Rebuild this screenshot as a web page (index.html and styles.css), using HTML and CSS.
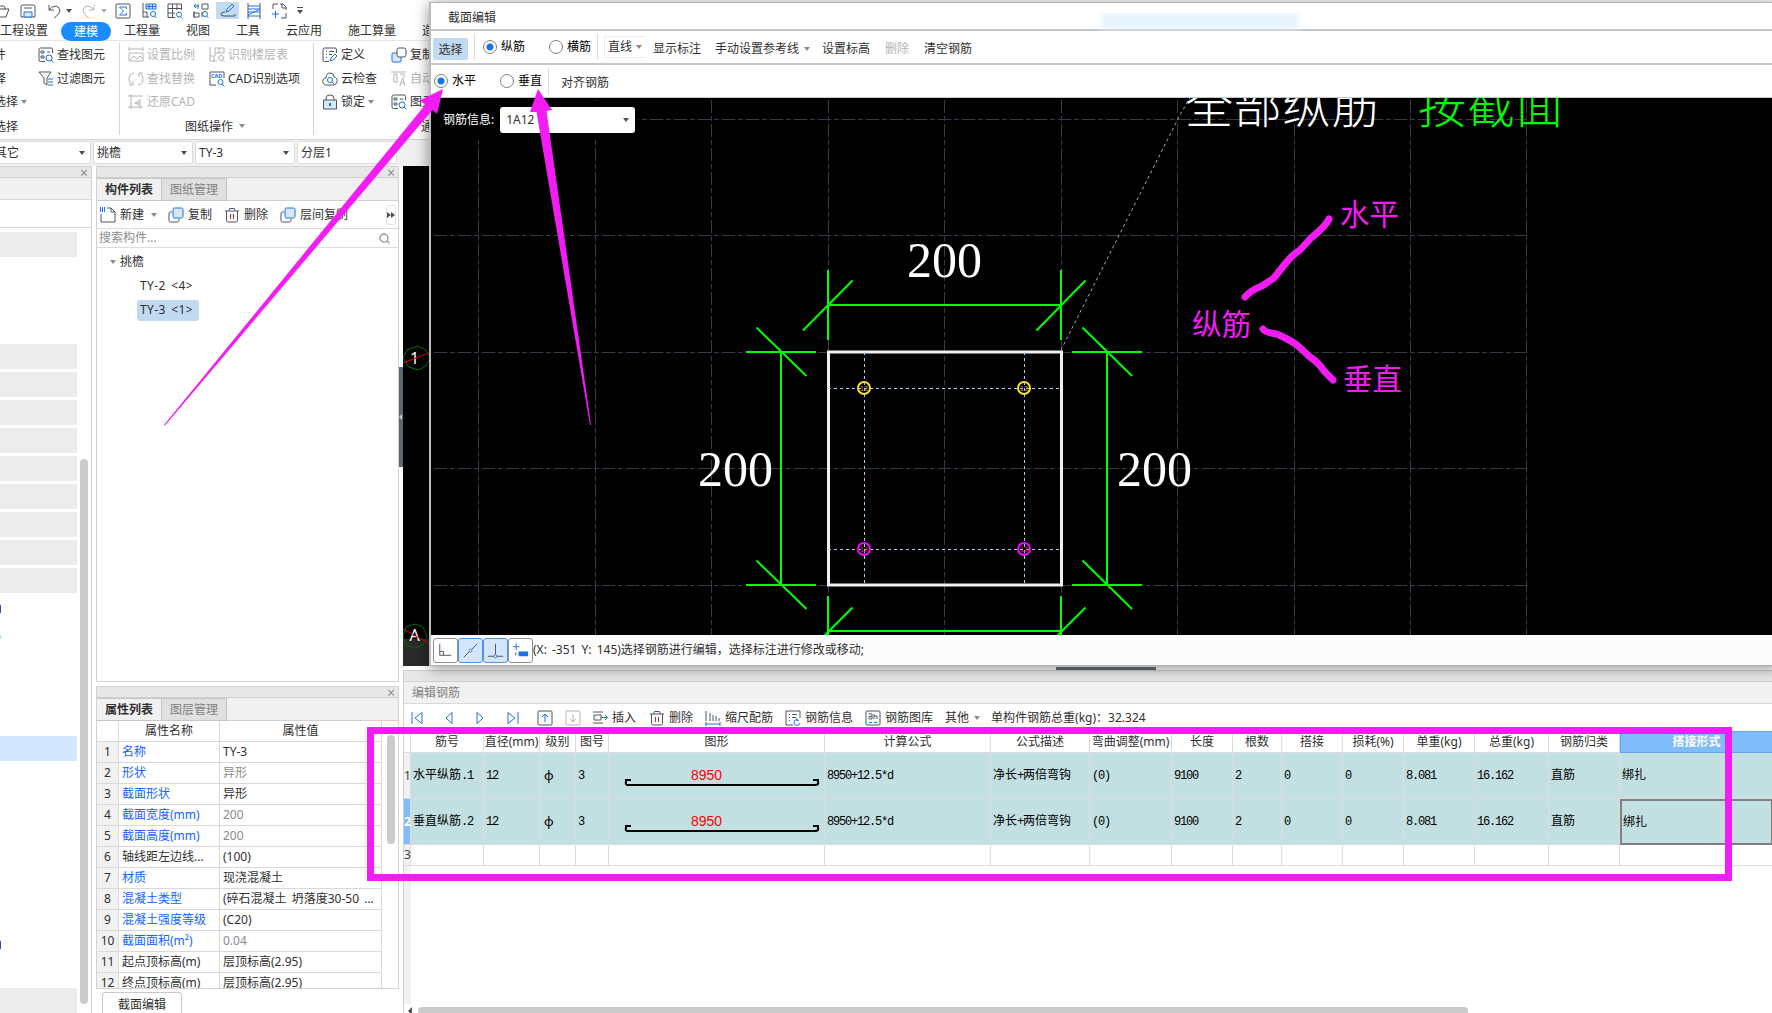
FILE: index.html
```html
<!DOCTYPE html>
<html lang="zh-CN">
  <head>
    <meta charset="UTF-8" />
    <meta name="viewport" content="width=device-width, initial-scale=1.0" />
    <title>截面编辑</title>
    <link rel="stylesheet" href="styles.css">
  </head>
  <body>
    <!-- shared icons -->
    <svg class="defs" width="0" height="0">
      <symbol id="i-copy" viewBox="0 0 16 16"><path class="d" d="M4 5H2.500Q1 5 1 6.500V13.500Q1 15 2.500 15H9.500Q11 15 11 13.500V12" /><rect class="bf" x="5" y="1" width="10" height="10" rx="1.500" /></symbol>
      <symbol id="i-trash" viewBox="0 0 16 16"><path class="d" d="M1 4H15M5 4V2.500Q5 1.500 6 1.500H10Q11 1.500 11 2.500V4M2.500 4V13.500Q2.500 15 4 15H12Q13.500 15 13.500 13.500V4" /><path class="r" d="M6.500 7V12M9.500 7V12" /></symbol>
      <symbol id="i-list" viewBox="0 0 16 16"><path class="d" d="M7 14.500H2.500Q1 14.500 1 13V2.500Q1 1 2.500 1H13Q14.500 1 14.500 2.500V6M4 4.500H5M7 4.500H12M4 7.500H5M7 7.500H10M4 10.500H5" /><path class="b" d="M8 14L9 11L13 7L15 9L11 13Z" /></symbol>
      <symbol id="i-find" viewBox="0 0 16 16"><path class="d" d="M7 14.500H2.500Q1 14.500 1 13V2.500Q1 1 2.500 1H13Q14.500 1 14.500 2.500V6M3 4H6V6H3ZM3 9H6V11H3ZM9 5H12" /><circle class="b" cx="11" cy="11" r="3" /><path class="b" d="M13 13L15.500 15.500" /></symbol>
      <symbol id="i-grid" viewBox="0 0 16 16"><path class="d" d="M8 14.500H1V1H14.500V7M1 5.500H14.500M1 10H8M5.500 1V14.500M10 1V7" /><circle class="b" cx="12" cy="11.500" r="2.500" /><path class="b" d="M13.500 13.500L15.500 15.500" /></symbol>
    </svg>

    <div class="app">
      <div class="quickbar">
        <svg class="ic open" viewBox="0 0 16 16"><path class="d" d="M0 3H9Q11 3 11 5V6M0 14H12L15 6H4" /></svg>
        <svg class="ic save" viewBox="0 0 16 16"><path class="d" d="M3 2H13Q15 2 15 4V14H1V4Q1 2 3 2ZM4 5H12" /><path class="bf" d="M4 9H12V14H4Z" /></svg>
        <svg class="ic undo" viewBox="0 0 16 16"><path class="d" d="M3 2V7H8M3 7Q6 3 10 3Q14 4 14 8Q13 12 8 15" /></svg>
        <i class="caret"></i>
        <svg class="ic redo" viewBox="0 0 16 16"><path class="g" d="M13 2V7H8M13 7Q10 3 6 3Q2 4 2 8Q3 12 8 15" /></svg>
        <i class="caret light"></i>
        <svg class="ic sigma" viewBox="0 0 16 16"><rect class="d" x="1" y="1" width="14" height="14" rx="1" /><path class="b" d="M11.500 6V4H4.500L8.500 8L4.500 12H11.500V10" /></svg>
        <svg class="ic q" viewBox="0 0 16 16"><path class="d" d="M2 0V14H8M2 9H6V14" /><path class="bf" d="M5 1H15V6H5ZM5 3.500H15M8 1V6M11.500 1V6" /><circle class="b" cx="12" cy="11" r="2.500" /><path class="b" d="M13.500 13L15.500 15" /></svg>
        <svg class="ic q"><use href="#i-grid" /></svg>
        <svg class="ic q" viewBox="0 0 16 16"><path class="d" d="M9 1H15V6H9ZM1 10H6V14H1ZM9 9V14M1 8V15" /><path class="b" d="M1 3H6M3 1L1 3L3 5M5 1V6" /><circle class="b" cx="12" cy="11" r="2.500" /><path class="b" d="M13.500 13L15.500 15" /></svg>
        <span class="q-active"><svg class="ic" viewBox="0 0 16 16"><path class="b" d="M6 10L7 7L12 2L14 4L9 9Z" /><path class="d" d="M5 10Q1 10 1 12Q1 14 4 14H15V12" /></svg></span>
        <svg class="ic q" viewBox="0 0 16 16"><path class="d" d="M2 0V16M14 0V16" /><path class="b" d="M2 3H14M2 6H14L2 12M2 9H14M2 13H14" /></svg>
        <svg class="ic q last" viewBox="0 0 16 16"><path class="d" d="M2 6V1H7M9 1H12L15 4V7M15 10V15H10M11 1V5H15" /><path class="b" d="M1 11H8M4.500 8V15" /></svg>
        <i class="caret over"></i>
      </div>

      <div class="menu">
        <span class="first">工程设置</span>
        <span class="on">建模</span>
        <span>工程量</span>
        <span>视图</span>
        <span>工具</span>
        <span>云应用</span>
        <span>施工算量</span>
        <span>造价</span>
      </div>

      <div class="ribbon">
        <div class="group g1">
          <div class="col c-cut">
            <span>件</span><span>择</span><span>选择 <i class="caret grey"></i></span><span>选择</span>
          </div>
          <div class="col">
            <span><svg class="ic"><use href="#i-find" /></svg>查找图元</span>
            <span><svg class="ic" viewBox="0 0 16 16"><path class="d" d="M1 1H13L9 7V14L6 12V7Z" /><path class="b" d="M10 8H15M10 11H15M10 14H15" /></svg>过滤图元</span>
          </div>
        </div>
        <div class="group g2">
          <div class="pair">
            <div class="col off">
              <span><svg class="ic" viewBox="0 0 16 16"><path class="g" d="M1 2H15M1 0V4M15 0V4M1 6H15V14H1ZM2 13L6 9L9 12L12 9L15 12" /></svg>设置比例</span>
              <span><svg class="ic" viewBox="0 0 16 16"><path class="g" d="M6 2Q1 3 1 8Q1 12 4 14M1 14H5V10M10 14Q15 13 15 8Q15 4 12 2M15 2H11V6" /></svg>查找替换</span>
              <span><svg class="ic" viewBox="0 0 16 16"><path class="g" d="M0 2H15M3 0V15M0 13H15M12 5V15M12 6L7 9L11 11M7 9H12" /></svg>还原CAD</span>
            </div>
            <div class="col c2">
              <span class="off"><svg class="ic" viewBox="0 0 16 16"><path class="g" d="M1 0V14H8M1 9H5V14M6 1H15V6H6ZM10 1V6M6 6V9" /><circle class="g" cx="12" cy="11" r="2.500" /><path class="g" d="M13.500 13L15.500 15" /></svg>识别楼层表</span>
              <span><svg class="ic" viewBox="0 0 16 16"><path class="d" d="M7 14H1V1H15V7" /><text class="cad" x="2" y="7">CAD</text><circle class="b" cx="11.500" cy="11" r="2.500" /><path class="b" d="M13 13L15.500 15.500" /></svg>CAD识别选项</span>
            </div>
          </div>
          <div class="caption">图纸操作 <i class="caret grey"></i></div>
        </div>
        <div class="group g3">
          <div class="col">
            <span><svg class="ic"><use href="#i-list" /></svg>定义</span>
            <span><svg class="ic" viewBox="0 0 16 16"><path class="d" d="M4 14Q0 13 1 9Q2 7 4 7Q4 2 8 2Q12 2 12 6Q16 7 15 11Q14 14 12 14Z" /><circle class="b" cx="8" cy="9" r="2.500" /><path class="b" d="M10 11L12 13" /></svg>云检查</span>
            <span><svg class="ic" viewBox="0 0 16 16"><path class="d" d="M4 6V4Q4 1 8 1Q12 1 12 4V6" /><path class="df" d="M1.500 6H14.500V15H1.500Z" /><path class="b2" d="M8 9V12" /></svg>锁定 <i class="caret grey"></i></span>
          </div>
          <div class="col c3">
            <span><svg class="ic" viewBox="0 0 16 16"><rect class="bf" x="1" y="6" width="9" height="9" rx="1" /><rect class="dw" x="6" y="1" width="9" height="9" rx="2" /></svg>复制</span>
            <span class="off"><svg class="ic" viewBox="0 0 16 16"><path class="g" d="M0 1H15M3 3H6V11H3ZM9 3H13V7M9 15L11.500 7L14 15M10 12H13" /></svg>自动</span>
            <span><svg class="ic"><use href="#i-find" /></svg>图元</span>
            <span class="tong">通</span>
          </div>
        </div>
      </div>

      <div class="combos">
        <div class="combo k1">其它<i class="caret"></i></div>
        <div class="combo">挑檐<i class="caret"></i></div>
        <div class="combo">TY-3<i class="caret"></i></div>
        <div class="combo">分层1</div>
      </div>

      <div class="main">
        <div class="nav">
          <div class="dock-title"><b class="x">×</b></div>
          <div class="nav-sub"></div>
          <div class="nav-tool"></div>
          <div class="nav-body">
            <div class="nav-list">
              <div class="blk top"></div>
              <div class="blk"></div><div class="blk"></div><div class="blk"></div>
              <div class="blk"></div><div class="blk"></div><div class="blk"></div>
              <div class="blk"></div><div class="blk"></div><div class="blk"></div>
              <div class="mark"></div>
              <div class="mark cyan"></div>
              <div class="blk sel"></div>
              <div class="mark low"></div>
              <div class="blk last"></div>
            </div>
            <div class="nav-thumb"></div>
          </div>
        </div>

        <div class="side">
          <div class="dock comp">
            <div class="dock-title"><b class="x">×</b></div>
            <div class="tabs"><span class="on">构件列表</span><span>图纸管理</span></div>
            <div class="comp-tools">
              <span><svg class="ic" viewBox="0 0 16 16"><path class="d" d="M7 1H11L15 5V15H1V7M11 1V5H15" /><path class="chk" d="M0 2.500H5" /></svg>新建</span>
              <i class="caret grey"></i>
              <span class="t2"><svg class="ic"><use href="#i-copy" /></svg>复制</span>
              <span class="t3"><svg class="ic"><use href="#i-trash" /></svg>删除</span>
              <span class="t3"><svg class="ic"><use href="#i-copy" /></svg>层间复制</span>
              <em class="more"><svg viewBox="0 0 8 6"><path d="M0 0L4 3L0 6ZM4 0L8 3L4 6Z" /></svg></em>
            </div>
            <div class="search">搜索构件...<svg viewBox="0 0 11 11"><circle cx="5" cy="5" r="4" /><path d="M8 8L10.500 10.500" /></svg></div>
            <div class="tree">
              <div class="node"><i class="caret grey"></i>挑檐</div>
              <div class="leaf"><span>TY-2 &lt;4&gt;</span></div>
              <div class="leaf"><span class="on">TY-3 &lt;1&gt;</span></div>
            </div>
          </div>

          <div class="dock prop">
            <div class="dock-title"><b class="x">×</b></div>
            <div class="tabs"><span class="on">属性列表</span><span>图层管理</span></div>
            <div class="prop-body">
              <table class="ptable">
                <tr><th class="n"></th><th class="name">属性名称</th><th>属性值</th></tr>
                <tr><td class="n">1</td><td class="lk">名称</td><td>TY-3</td></tr>
                <tr><td class="n">2</td><td class="lk">形状</td><td class="dim">异形</td></tr>
                <tr><td class="n">3</td><td class="lk">截面形状</td><td>异形</td></tr>
                <tr><td class="n">4</td><td class="lk">截面宽度(mm)</td><td class="dim">200</td></tr>
                <tr><td class="n">5</td><td class="lk">截面高度(mm)</td><td class="dim">200</td></tr>
                <tr><td class="n">6</td><td>轴线距左边线...</td><td>(100)</td></tr>
                <tr><td class="n">7</td><td class="lk">材质</td><td>现浇混凝土</td></tr>
                <tr><td class="n">8</td><td class="lk">混凝土类型</td><td class="wide">(碎石混凝土 坍落度30-50 ...</td></tr>
                <tr><td class="n">9</td><td class="lk">混凝土强度等级</td><td>(C20)</td></tr>
                <tr><td class="n">10</td><td class="lk">截面面积(m²)</td><td class="dim">0.04</td></tr>
                <tr><td class="n">11</td><td>起点顶标高(m)</td><td>层顶标高(2.95)</td></tr>
                <tr><td class="n">12</td><td>终点顶标高(m)</td><td>层顶标高(2.95)</td></tr>
              </table>
              <div class="prop-thumb"></div>
            </div>
          </div>
          <div class="bottom-tab">截面编辑</div>
        </div>

        <div class="vsplit"><div class="grip"><i></i></div></div>

        <div class="work">
          <svg class="model" viewBox="403 166 200 500">
            <rect x="403" y="639" width="200" height="27" fill="#2a2a2a" />
            <polygon points="418,346 426,350 430,358 426,366 418,370 409,367 403,358 407,350" fill="none" stroke="#007800" />
            <text x="410" y="364">1</text>
            <path d="M403 363L431 352" stroke="#f00000" />
            <polygon points="415,624 423,627 427,636 423,645 415,648 406,645 403,636 406,627" fill="none" stroke="#006a00" />
            <text x="409.500" y="641">A</text>
            <path d="M403 629L430 644" stroke="#e00000" />
          </svg>
          <div class="hsplit"></div>
          <div class="rebar">
            <div class="rb-bar"></div>
            <div class="rb-title">编辑钢筋</div>
            <div class="rb-tools">
              <svg class="nv" viewBox="0 0 12 14"><path d="M1 1V13M11 1.500V12.500L4 7Z" /></svg>
              <svg class="nv n2" viewBox="0 0 12 14"><path d="M9 1.500V12.500L3 7Z" /></svg>
              <svg class="nv n3" viewBox="0 0 12 14"><path d="M3 1.500V12.500L9 7Z" /></svg>
              <svg class="nv n4" viewBox="0 0 12 14"><path d="M11 1V13M1 1.500V12.500L8 7Z" /></svg>
              <svg class="ic u1" viewBox="0 0 16 16"><rect class="d" x="1" y="1" width="14" height="14" rx="1" /><path class="b" d="M8 12V4M5 7L8 4L11 7" /></svg>
              <svg class="ic u2" viewBox="0 0 16 16"><rect class="g" x="1" y="1" width="14" height="14" rx="1" /><path class="g" d="M8 4V12M5 9L8 12L11 9" /></svg>
              <span class="s1"><svg class="ic" viewBox="0 0 16 16"><path class="d" d="M1 2H11M1 13H11M2 5H9V10H2Z" /><path class="b" d="M9 7.500H15M13 5L15.500 7.500L13 10" /></svg>插入</span>
              <span class="s2"><svg class="ic"><use href="#i-trash" /></svg>删除</span>
              <span class="s3"><svg class="ic" viewBox="0 0 16 16"><path class="d" d="M1 1V11M5 3V11M8 5V11M11 6V11M14 8V11" /><path class="b" d="M1 14H15M1 12V16M15 12V16" /></svg>缩尺配筋</span>
              <span class="s4"><svg class="ic" viewBox="0 0 16 16"><path class="d" d="M8 15H1V1H15V8M4 4.500H5M7 4.500H12M4 7.500H5M7 7.500H11M4 10.500H5" /><path class="b" d="M15 13A3 3 0 1 1 12 9.500M12 8V11L14 10" /></svg>钢筋信息</span>
              <span class="s5"><svg class="ic" viewBox="0 0 16 16"><rect class="d" x="1" y="1" width="14" height="14" rx="1" /><path class="d" d="M3.500 4H7V9H4V6.500H7M9 4V9M9 6H12V9" /><path class="b" d="M4 12.500H7M9 12.500H12" /></svg>钢筋图库</span>
              <span class="s6">其他</span><i class="caret grey"></i>
              <span class="s7">单构件钢筋总重(kg)：32.324</span>
            </div>
            <div class="rb-area">
              <table class="rtable">
                <colgroup>
                  <col class="w7"><col class="w73"><col class="w56"><col class="w36"><col class="w33"><col class="w216"><col class="w166"><col class="w99"><col class="w82"><col class="w61"><col class="w49"><col class="w61"><col class="w61"><col class="w71"><col class="w74"><col class="w71"><col class="w153">
                </colgroup>
                <tr class="head"><th></th><th>筋号</th><th>直径(mm)</th><th>级别</th><th>图号</th><th>图形</th><th>计算公式</th><th>公式描述</th><th>弯曲调整(mm)</th><th>长度</th><th>根数</th><th>搭接</th><th>损耗(%)</th><th>单重(kg)</th><th>总重(kg)</th><th>钢筋归类</th><th class="on">搭接形式</th></tr>
                <tr class="full">
                  <td class="n">1</td><td>水平纵筋<u>.1</u></td><td><u>12</u></td><td class="phi">ф</td><td><u>3</u></td>
                  <td class="shape"><svg viewBox="0 0 215 45"><text x="82" y="27">8950</text><path d="M22 27H17V29Q16 32 19 32H206Q210 32 209 29V27H204" /></svg></td>
                  <td><u>8950+12.5*d</u></td><td>净长<u>+</u>两倍弯钩</td><td><u>(0)</u></td><td><u>9100</u></td><td><u>2</u></td><td><u>0</u></td><td><u>0</u></td><td><u>8.081</u></td><td><u>16.162</u></td><td>直筋</td><td>绑扎</td>
                </tr>
                <tr class="full">
                  <td class="n on">2</td><td>垂直纵筋<u>.2</u></td><td><u>12</u></td><td class="phi">ф</td><td><u>3</u></td>
                  <td class="shape"><svg viewBox="0 0 215 45"><text x="82" y="27">8950</text><path d="M22 27H17V29Q16 32 19 32H206Q210 32 209 29V27H204" /></svg></td>
                  <td><u>8950+12.5*d</u></td><td>净长<u>+</u>两倍弯钩</td><td><u>(0)</u></td><td><u>9100</u></td><td><u>2</u></td><td><u>0</u></td><td><u>0</u></td><td><u>8.081</u></td><td><u>16.162</u></td><td>直筋</td><td class="cur">绑扎</td>
                </tr>
                <tr class="empty"><td class="n">3</td><td></td><td></td><td></td><td></td><td></td><td></td><td></td><td></td><td></td><td></td><td></td><td></td><td></td><td></td><td></td><td></td></tr>
              </table>
              <div class="gutter"></div>
            </div>
            <div class="hscroll"><i></i><div></div></div>
          </div>
        </div>
      </div>
    </div>

    <!-- section editor window -->
    <div class="dialog">
      <div class="dlg-title">截面编辑<div class="ghost"></div></div>
      <div class="dlg-row">
        <span class="pick">选择</span>
        <span class="sep"></span>
        <label class="radio on"><i></i>纵筋</label>
        <label class="radio second"><i></i>横筋</label>
        <span class="sep sp2"></span>
        <span class="line">直线<i class="caret grey"></i></span>
        <span class="a1">显示标注</span>
        <span class="a2">手动设置参考线</span><i class="caret grey"></i>
        <span class="a3">设置标高</span>
        <span class="a4">删除</span>
        <span class="a4 dark">清空钢筋</span>
      </div>
      <div class="dlg-row r2">
        <label class="radio on"><i></i>水平</label>
        <label class="radio second"><i></i>垂直</label>
        <span class="sep sp2"></span>
        <span class="align">对齐钢筋</span>
      </div>
      <div class="canvas">
        <svg class="cad-view" viewBox="431 98 1341 537">
          <g class="gridlines">
            <path d="M434 119.500H1527M434 235.500H1527M434 352.500H1527M434 468.500H1527M434 585.500H1527" />
            <path d="M478.500 100V635M595.500 100V635M711.500 100V635M828.500 100V635M944.500 100V635M1061.500 100V635M1177.500 100V635M1294.500 100V635M1410.500 100V635M1526.500 100V635" />
          </g>
          <path class="leader" d="M1061 350L1181 113L1190 98" />
          <rect class="sect" x="828.500" y="352" width="233" height="233" />
          <path class="ref" d="M828 388.500H1061M828 549.500H1061M864.500 352V585M1024.500 352V585" />
          <g class="dims">
            <path d="M828 305H1061M828 270V340M1061 270V340M781 352V585M746 352H816M746 585H816M1107 352V585M1072 352H1142M1072 585H1142M828 631H1061M828 596V636M1061 596V636" />
            <path d="M803 330.500L852.500 280.500M1036.500 330.500L1085.500 280.500M756.500 327.500L806.500 376M756.500 560.500L806.500 609M1082.500 327.500L1132 376M1082.500 560.500L1132 609M824 636L852.500 607.500M1057 636L1085.500 607.500" />
          </g>
          <g class="num">
            <text x="907" y="277">200</text><text x="698" y="486">200</text><text x="1117" y="486">200</text>
          </g>
          <g class="bars">
            <circle class="y" cx="864" cy="388" r="6" /><circle class="y" cx="1024" cy="388" r="6" />
            <circle cx="864" cy="549" r="6" /><circle cx="1024" cy="549" r="6" />
            <text class="y" x="860" y="391">12</text><text class="y" x="1020" y="391">12</text>
            <text x="860" y="552">12</text><text x="1020" y="552">12</text>
          </g>
          <text class="big" x="1185" y="123">全部纵筋</text>
          <text class="big green" x="1418" y="123">按截面</text>
        </svg>
        <div class="info">钢筋信息:<span class="info-combo">1A12<i class="caret"></i></span></div>
      </div>
      <div class="status">
        <span class="sb"><svg viewBox="0 0 24 24"><path d="M6 5V17H18M6 13H10V17" /></svg></span>
        <span class="sb on"><svg viewBox="0 0 24 24"><path d="M5 19L19 5" /><circle cx="12" cy="12" r="1.500" /></svg></span>
        <span class="sb on"><svg viewBox="0 0 24 24"><path d="M12 5V17M4 18H20" /><circle cx="12" cy="18" r="1.500" /></svg></span>
        <span class="sb"><svg viewBox="0 0 24 24"><path class="b" d="M4 8H11M7.500 4.500V11.500" /><path class="bar" d="M10 15.500H20" /><path d="M7 14V17" /></svg></span>
        <span class="tip">(X: -351 Y: 145)选择钢筋进行编辑，选择标注进行修改或移动;</span>
      </div>
    </div>
    <div class="pull"></div>

    <!-- marker notes drawn over everything -->
    <svg class="notes" viewBox="0 0 1772 1013">
      <polygon points="443,89 419.500,100.500 425.500,104.500 164,425 165,425.500 432.500,110 437,114" />
      <polygon points="538,89 530,112 536.500,112 590,425 591,425 546.500,111 552,110" />
      <rect x="370.500" y="730.500" width="1358" height="147" />
      <path d="M1329 219Q1326 226 1311 238L1300 250Q1292 255 1285 264L1274 278L1262 286Q1251 290 1245 297" />
      <path d="M1263 329Q1266 333 1277 334Q1290 340 1297 345L1310 357Q1319 363 1324 371L1333 380" />
      <text x="1340" y="225">水平</text><text x="1192" y="335">纵筋</text><text x="1343" y="390">垂直</text>
    </svg>
  </body>
</html>
```
FILE: styles.css
```css
* {
  box-sizing: border-box;
}
body {
  margin: 0;
  width: 1772px;
  height: 1013px;
  overflow: hidden;
  position: relative;
  background: #fff;
  color: #303030;
  font: 12px/16px "Noto Sans", "Noto Sans CJK SC", sans-serif;
  white-space: nowrap;
}
svg {
  display: block;
  flex: none;
}
.defs {
  position: absolute;
}
i, em, u {
  font-style: normal;
  text-decoration: none;
}
.ic {
  width: 16px;
  height: 16px;
  fill: none;
}
.d { stroke: #4d5464; fill: none; }
.b { stroke: #1a73e0; fill: none; }
.b2 { stroke: #1a73e0; stroke-width: 2; }
.g { stroke: #b4b4b4; fill: none; }
.r { stroke: #e02020; fill: none; }
.bf { stroke: #1a73e0; fill: #d8e8fc; }
.df { stroke: #4d5464; fill: #d8e8fc; }
.dw { stroke: #4d5464; fill: #fff; }
.chk { stroke: #1a73e0; stroke-width: 5; stroke-dasharray: 1 1; }
.cad { font: bold 5.5px "Noto Sans", sans-serif; fill: #1a73e0; }

.caret {
  display: inline-block;
  flex: none;
  width: 0;
  height: 0;
  border: 3px solid transparent;
  border-top: 4px solid #4a4f58;
  border-bottom: 0;
}
.caret.grey { border-top-color: #8a8a8a; }
.caret.light { border-top-color: #b0b0b0; }

.app {
  width: 1772px;
  height: 1013px;
  display: flex;
  flex-direction: column;
}

/* top bars */
.quickbar {
  height: 21px;
  display: flex;
  align-items: center;
}
.quickbar .open { margin-left: -6px; }
.quickbar .save { margin-left: 10px; }
.quickbar .undo { margin: 0 4px 0 10px; }
.quickbar .redo { margin: 0 4px 0 9px; }
.quickbar .sigma { margin-left: 8px; }
.quickbar .q { margin-left: 10px; }
.quickbar .last { margin-left: 9px; }
.q-active {
  margin-left: 7px;
  margin-right: -3px;
  padding: 0 3.5px;
  height: 17px;
  background: #c3dbf3;
}
.caret.over {
  width: 6px;
  height: 8px;
  margin-left: 10px;
  border: 0;
  border-top: 1px solid #4a4f58;
}
.caret.over::after {
  content: "";
  display: block;
  margin-top: 2px;
  border: 3px solid transparent;
  border-top: 4px solid #4a4f58;
  border-bottom: 0;
}
.menu {
  height: 20px;
  padding-top: 1px;
  display: flex;
  align-items: center;
  border-bottom: 1px solid #e6e6e6;
}
.menu span {
  padding: 0 13px;
}
.menu .first {
  padding-left: 0;
}
.menu .on {
  height: 19px;
  line-height: 19px;
  border-radius: 10px;
  background: #1b8cff;
  color: #fff;
}
.ribbon {
  height: 98px;
  padding-top: 2px;
  display: flex;
}
.group {
  display: flex;
  height: 92px;
  border-right: 1px solid #d5d5d5;
}
.g1 { width: 120px; }
.g2 { width: 194px; flex-direction: column; padding-left: 8px; }
.g3 { border: 0; padding-left: 8px; }
.col {
  display: grid;
  grid-template-rows: 24px 23px 23px 27px;
  align-content: start;
}
.pair {
  display: flex;
  height: 70px;
}
.pair .col {
  grid-template-rows: 24px 23px 23px;
}
.col span {
  display: flex;
  align-items: center;
  gap: 3px;
}
.c-cut {
  width: 44px;
  margin-left: -6px;
}
.c2 { margin-left: 14px; }
.c3 { margin-left: 14px; }
.tong { padding-left: 30px; }
.off { color: #b4b4b4; }
.caption {
  padding: 6px 0 0 57px;
}
.caption .caret {
  margin: 0 0 3px 3px;
}
.combos {
  height: 27px;
  background: #f0f0f0;
  border-top: 1px solid #d2d2d2;
  padding-top: 1px;
  display: flex;
  gap: 2px;
}
.combo {
  width: 100px;
  height: 23px;
  padding: 0 5px 0 3px;
  display: flex;
  align-items: center;
  justify-content: space-between;
  background: #fff;
  border: 1px solid #dcdcdc;
  border-radius: 3px;
}
.k1 {
  margin-left: -9px;
}

/* docks */
.main {
  flex: 1;
  height: 847px;
  display: flex;
}
.dock-title {
  height: 11px;
  background: #e7e7e7;
  border-bottom: 1px solid #cfcfcf;
  display: flex;
  justify-content: flex-end;
  align-items: center;
  padding-right: 3px;
}
.x {
  font: 14px/11px "Noto Sans", sans-serif;
  color: #8c8c8c;
}
.nav {
  width: 92px;
  border-right: 1px solid #cfcfcf;
  border-top: 1px solid #d4d4d4;
  display: flex;
  flex-direction: column;
}
.nav-sub {
  height: 22px;
  background: #f1f1f1;
  border-bottom: 1px solid #d8d8d8;
}
.nav-tool {
  height: 28px;
  border-bottom: 1px solid #d8d8d8;
}
.nav-body {
  flex: 1;
  display: flex;
}
.nav-list {
  width: 77px;
  height: 785px;
  overflow: hidden;
}
.blk {
  height: 25px;
  margin-bottom: 3px;
  background: #ececec;
}
.blk.top {
  margin: 4px 0 87px;
}
.mark {
  width: 1px;
  height: 8px;
  background: #3050b0;
  margin: 12px 0 22px;
}
.mark.cyan {
  height: 4px;
  background: #9be8f4;
  margin: 0 0 97px;
}
.blk.sel { background: #d4e7ff; margin-bottom: 180px; }
.mark.low { margin: 0 0 39px; }
.nav-thumb {
  width: 8px;
  height: 545px;
  margin: 231px 0 0 3px;
  border-radius: 4px;
  background: #cbcbcb;
}
.side {
  width: 303px;
  margin-left: 4px;
  display: flex;
  flex-direction: column;
}
.side > div {
  flex: none;
}
.dock {
  border: 1px solid #d2d2d2;
}
.comp {
  height: 516px;
}
.prop {
  height: 303px;
  margin-top: 4px;
}
.tabs {
  height: 23px;
  display: flex;
  background: #f1f1f1;
  border-bottom: 1px solid #d2d2d2;
}
.tabs span {
  width: 65px;
  height: 23px;
  line-height: 22px;
  text-align: center;
  background: #e0e0e0;
  border: 1px solid #c6c6ca;
  border-left: 0;
  color: #828282;
}
.tabs .on {
  background: #f1f1f1;
  color: #303030;
  font-weight: 600;
}
.comp-tools {
  height: 28px;
  padding-left: 3px;
  display: flex;
  align-items: center;
  border-bottom: 1px solid #dcdcdc;
}
.comp-tools span {
  display: flex;
  align-items: center;
  gap: 4px;
}
.comp-tools .caret { margin-left: 7px; }
.comp-tools .t2 { margin-left: 11px; }
.comp-tools .t3 { margin-left: 12px; }
.more {
  width: 10px;
  height: 20px;
  margin-left: auto;
  margin-right: 2px;
  border: 1px solid #e4e4e4;
  border-radius: 3px;
  display: flex;
  align-items: center;
  justify-content: center;
}
.more svg {
  width: 8px;
  height: 6px;
  fill: #4a4f58;
}
.search {
  height: 19px;
  padding: 0 8px 0 2px;
  display: flex;
  align-items: center;
  justify-content: space-between;
  color: #8c8c8c;
  border-bottom: 1px solid #dcdcdc;
}
.search svg {
  width: 11px;
  height: 11px;
  fill: none;
  stroke: #999;
  stroke-width: 1.3;
}
.tree {
  padding-top: 2px;
}
.node, .leaf {
  height: 24px;
  display: flex;
  align-items: center;
}
.node { padding-left: 13px; gap: 4px; }
.leaf { padding-left: 40px; }
.leaf span {
  height: 21px;
  line-height: 20px;
  width: 62px;
  padding-left: 3px;
  border-radius: 3px;
  word-spacing: 2px;
  letter-spacing: 0.4px;
}
.leaf .on { background: #c1d9f1; }
.prop-body {
  height: 267px;
  overflow: hidden;
  display: flex;
}
.ptable {
  width: 285px;
  table-layout: fixed;
  border-collapse: separate;
  border-spacing: 0;
}
.ptable th, .ptable td {
  height: 21px;
  padding: 0 3px;
  border-right: 1px solid #d8d8d8;
  border-bottom: 1px solid #d8d8d8;
  overflow: hidden;
  font-weight: normal;
  line-height: 16px;
}
.ptable .n {
  width: 22px;
  padding: 0;
  text-align: center;
  background: #f1f1f1;
}
.ptable th.n { background: #fff; }
.ptable .name { width: 101px; }
.ptable .wide { word-spacing: 2px; }
.lk { color: #1463ff; }
.dim { color: #8a8a8a; }
.prop-thumb {
  width: 8px;
  height: 109px;
  margin: 14px 0 0 5px;
  border-radius: 4px;
  background: #cbcbcb;
}
.bottom-tab {
  width: 80px;
  height: 21px;
  margin: 3px 0 0 6px;
  text-align: center;
  line-height: 23px;
  border: 1px solid #c8c8c8;
  border-bottom: 0;
  border-radius: 4px 4px 0 0;
}
.vsplit {
  width: 4px;
}
.grip {
  height: 100px;
  margin-top: 201px;
  padding-top: 47px;
  background: #5d6873;
}
.grip i {
  display: block;
  width: 3px;
  border: 3px solid transparent;
  border-left: 0;
  border-right: 3px solid #c0c6cc;
}

/* model view and rebar table */
.work {
  flex: 1;
  min-width: 0;
  display: flex;
  flex-direction: column;
}
.model {
  width: 200px;
  height: 500px;
  background: #000;
}
.model text {
  font: 16px "Noto Sans", sans-serif;
  fill: #fff;
}
.hsplit { height: 4px; flex: none; }
.rebar {
  height: 343px;
  flex: none;
  border-left: 1px solid #d2d2d2;
  display: flex;
  flex-direction: column;
}
.rebar > div {
  flex: none;
}
.rb-bar {
  height: 12px;
  background: #e7e7e7;
  border: 1px solid #cfcfcf;
  border-width: 1px 0;
}
.rb-title {
  height: 22px;
  line-height: 21px;
  padding-left: 8px;
  background: #f1f1f1;
  color: #828282;
  border-bottom: 1px solid #d8d8d8;
}
.rb-tools {
  height: 27px;
  padding-left: 7px;
  display: flex;
  align-items: center;
}
.rb-tools span {
  display: flex;
  align-items: center;
  gap: 4px;
}
.nv {
  width: 12px;
  height: 14px;
  fill: none;
  stroke: #1a73e0;
}
.n2 { margin-left: 20px; }
.n3 { margin-left: 19px; }
.n4 { margin-left: 21px; }
.u1 { margin-left: 18px; }
.u2 { margin-left: 12px; }
.s1 { margin-left: 11px; }
.s2 { margin-left: 13px; }
.s3 { margin-left: 12px; }
.s4 { margin-left: 12px; }
.s5 { margin-left: 12px; }
.s6 { margin: 0 5px 0 12px; }
.s7 { margin-left: 11px; word-spacing: 2px; }
.rb-area {
  height: 273px;
  display: flex;
  flex-direction: column;
}
.rtable {
  width: 1369px;
  table-layout: fixed;
  border-collapse: separate;
  border-spacing: 0;
}
.w7 { width: 7px; }
.w73 { width: 73px; }
.w56 { width: 56px; }
.w36 { width: 36px; }
.w33 { width: 33px; }
.w216 { width: 216px; }
.w166 { width: 166px; }
.w99 { width: 99px; }
.w82 { width: 82px; }
.w61 { width: 61px; }
.w49 { width: 49px; }
.w71 { width: 71px; }
.w74 { width: 74px; }
.w153 { width: 153px; }
.rtable th, .rtable td {
  padding: 0 0 1px 2px;
  border-right: 1px solid #dcdcdc;
  border-bottom: 1px solid #dcdcdc;
  font-weight: normal;
  line-height: 16px;
}
.rtable th {
  height: 22px;
  padding: 0;
}
.rtable th.on {
  background: #80bbfa;
  border: 1px solid #62a4ea;
  color: #fff;
  font-weight: 600;
}
.full td {
  height: 46px;
  background: #c2dfe1;
  color: #000;
}
.empty td { height: 21px; }
.rtable td.n {
  padding: 0;
  background: #f1f1f1;
  color: #404040;
}
.rtable td.n.on {
  background: #80bbfa;
  color: #fff;
  font-weight: bold;
}
.rtable td.cur {
  border: 2px solid #808080;
  padding: 0 0 0 1px;
}
.rtable td.shape {
  padding: 0;
}
.rtable td.phi {
  padding-left: 4px;
  font-size: 13px;
}
.shape svg {
  width: 215px;
  height: 45px;
  fill: none;
}
.shape path {
  stroke: #000;
  stroke-width: 2;
}
.shape text {
  font: 14px "Liberation Sans", sans-serif;
  fill: #f00;
}
u {
  font-family: "Liberation Mono", monospace;
  letter-spacing: -1.2px;
}
.gutter {
  flex: 1;
  width: 7px;
  background: #f1f1f1;
}
.hscroll {
  display: flex;
  padding: 3px 0 0 4px;
}
.hscroll i {
  border: 4px solid transparent;
  border-left: 0;
  border-right: 4px solid #4a4f58;
}
.hscroll div {
  width: 1050px;
  height: 6px;
  margin-left: 6px;
  border-radius: 4px 4px 0 0;
  background: #cbcbcb;
}

/* dialog */
.dialog {
  position: absolute;
  left: 429px;
  top: 2px;
  width: 1350px;
  height: 664px;
  display: flex;
  flex-direction: column;
  background: #fff;
  border: 1px solid #b4b4b4;
  border-left: 2px solid #b9bcc0;
  box-shadow: 0 2px 14px rgba(0, 0, 0, 0.45);
}
.dlg-title {
  height: 28px;
  padding-left: 17px;
  line-height: 29px;
  display: flex;
  border-bottom: 2px solid #c3c8cc;
}
.ghost {
  width: 196px;
  height: 15px;
  margin: 11px 0 0 606px;
  background: #e6f3fd;
  filter: blur(2px);
}
.dlg-row {
  height: 34px;
  display: flex;
  align-items: center;
  border-bottom: 2px solid #c3c8cc;
  padding: 3px 0 0 2px;
}
.r2 {
  height: 33px;
  border-bottom-width: 1px;
  padding-left: 3px;
}
.pick {
  width: 35px;
  height: 22px;
  line-height: 23px;
  text-align: center;
  background: #c1d9f1;
  border-radius: 2px;
}
.sep {
  width: 1px;
  height: 26px;
  margin: -3px 8px 0 6px;
  background: #dcdcdc;
}
.sp2 { margin: -3px 6px 0 6px; }
.radio {
  display: flex;
  align-items: center;
  gap: 4px;
  color: #000;
  margin-top: -4px;
}
.radio i {
  width: 14px;
  height: 14px;
  border: 1px solid #808080;
  border-radius: 50%;
}
.radio.on i {
  background: radial-gradient(circle, #1a73e0 0 3px, #fff 4px);
}
.radio.second { margin-left: 24px; }
.line {
  display: flex;
  align-items: center;
  gap: 4px;
  padding: 2px 3px;
  border: 1px solid #eee;
  border-right: 0;
  margin-top: -3px;
}
.a1 { margin-left: 8px; }
.a2 { margin: 0 5px 0 14px; }
.a3 { margin-left: 12px; }
.a4 { margin-left: 15px; color: #b4b4b4; }
.dark { color: #303030; }
.align { margin-left: 6px; }
.canvas {
  height: 537px;
  background: #000;
  position: relative;
}
.cad-view {
  width: 1341px;
  height: 537px;
  fill: none;
}
.gridlines {
  stroke: #343b49;
  stroke-dasharray: 13 3 5 3;
}
.leader { stroke: #aaa; stroke-dasharray: 3 3; }
.sect { stroke: #f2f0f2; stroke-width: 3; }
.ref { stroke: #a9cff5; stroke-dasharray: 3 3; }
.dims { stroke: #00ff00; stroke-width: 2; }
.num text {
  font: 50px "Liberation Serif", serif;
  fill: #fff;
}
.bars circle { stroke: #ff00ff; stroke-width: 2; }
.bars .y { stroke: #ffe020; }
.bars text { font: 7px "Liberation Sans", sans-serif; fill: #e02060; }
.bars text.y { stroke: none; fill: #c8a830; }
.big {
  font: 300 48px "Noto Sans CJK SC", sans-serif;
  letter-spacing: 0.7px;
  fill: #fff;
}
.green { fill: #00ff00; }
.info {
  position: absolute;
  left: 3px;
  top: 3px;
  width: 204px;
  height: 37px;
  padding-left: 9px;
  display: flex;
  align-items: center;
  gap: 6px;
  background: #000;
  color: #fff;
}
.info-combo {
  width: 135px;
  height: 26px;
  padding: 0 6px;
  display: flex;
  align-items: center;
  justify-content: space-between;
  background: #fff;
  border-radius: 3px;
  color: #303030;
}
.status {
  flex: 1;
  padding-left: 2px;
  display: flex;
  align-items: center;
  background: #fcfcfc;
}
.tip {
  word-spacing: 2px;
}
.sb {
  width: 25px;
  height: 25px;
  border: 1px solid #8e8e8e;
  border-radius: 3px;
  background: #fff;
}
.sb.on {
  background: #d5e5fb;
  border-color: #4c94ea;
}
.sb svg {
  width: 23px;
  height: 23px;
  fill: none;
  stroke: #4d5464;
}
.sb circle { stroke: #1a73e0; fill: #fff; }
.sb .b { stroke: #1a73e0; }
.sb .bar { stroke: #1a73e0; stroke-width: 5; }
.pull {
  position: absolute;
  left: 1056px;
  top: 667px;
  width: 100px;
  height: 3px;
  background: #4f5861;
}
.notes {
  position: absolute;
  left: 0;
  top: 0;
  width: 1772px;
  height: 1013px;
}
.notes polygon { fill: #f41cf4; }
.notes rect, .notes path {
  fill: none;
  stroke: #f41cf4;
  stroke-width: 7;
}
.notes path { stroke-linecap: round; stroke-linejoin: round; }
.notes text {
  font: 29.5px "Noto Sans CJK SC", sans-serif;
  fill: #f41cf4;
}
```
